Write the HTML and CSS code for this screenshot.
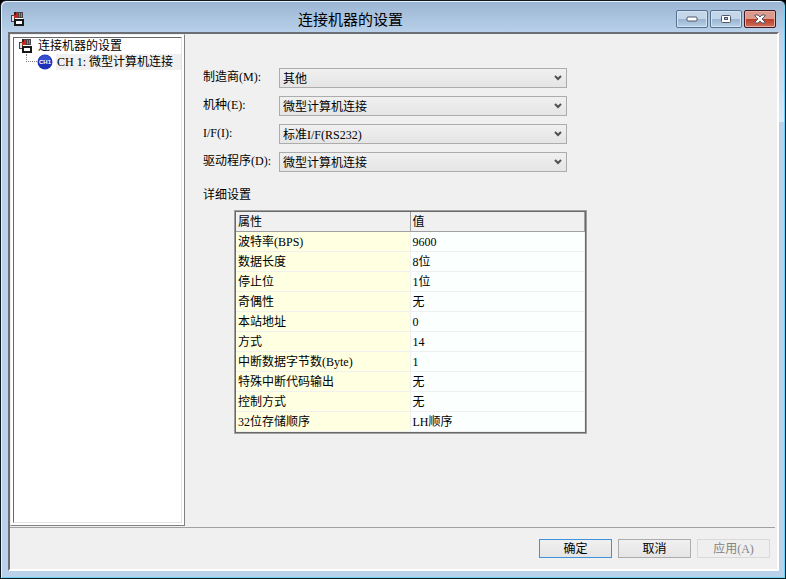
FILE: index.html
```html
<!doctype html>
<html lang="zh-CN">
  <head>
    <meta charset="UTF-8" />
    <meta name="viewport" content="width=device-width, initial-scale=1.0" />
    <title>连接机器的设置</title>
    <link rel="stylesheet" href="styles.css">
  </head>
  <body>
    <svg class="symbols" aria-hidden="true">
      <symbol id="machine" viewBox="0 0 14 14" shape-rendering="crispEdges">
        <path fill="#4a4448" d="M3 0h9v7H3zM0 3h3v7H0z" />
        <path fill="#e4e4e4" d="M1 4h2v5H1z" />
        <path fill="#c8281c" d="M3 1h4v5H3z" />
        <path fill="#3a2020" d="M3 0h2v3H3z" />
        <path fill="#8c8484" d="M8 1h1v4H8zM10 1h1v4h-1z" />
        <path fill="#181818" d="M3 7h10v7H3z" />
        <path fill="#fff" d="M5 9h6v3H5zM4 6h8v1H4z" />
      </symbol>
      <symbol id="chevron" viewBox="0 0 8 6">
        <path fill="none" stroke="#505050" stroke-width="2" d="M1 1l3 3 3-3" />
      </symbol>
    </svg>

    <div class="window">
      <header class="titlebar">
        <svg class="machine-icon"><use href="#machine" /></svg>
        <h1>连接机器的设置</h1>
        <div class="caption-buttons">
          <button type="button" class="caption" aria-label="最小化">
            <svg width="12" height="6" viewBox="0 0 12 6"><rect x="1" y="1" width="10" height="4" rx="1" fill="#fff" stroke="#535666" /></svg>
          </button>
          <button type="button" class="caption" aria-label="最大化">
            <svg width="12" height="10" viewBox="0 0 12 10"><rect x="1.5" y="1.5" width="9" height="7" rx="1" fill="#fff" stroke="#535666" /><rect x="4.5" y="3.5" width="3" height="2" fill="#9fb7d2" stroke="#535666" /></svg>
          </button>
          <button type="button" class="caption close" aria-label="关闭">
            <svg width="12" height="10" viewBox="0 0 12 10"><path fill="#fff" stroke="#535666" d="M1 1h3l2 2 2-2h3v1L8 5l3 3v1H8L6 7 4 9H1V8l3-3-3-3z" /></svg>
          </button>
        </div>
      </header>

      <form class="client">
        <div class="main">
          <nav class="sidebar" aria-label="连接机器">
            <ul class="tree">
              <li>
                <div class="node"><svg class="machine-icon"><use href="#machine" /></svg><span class="node-text">连接机器的设置</span></div>
                <ul>
                  <li class="node child">
                    <span class="branch"></span>
                    <svg class="channel-icon" viewBox="0 0 16 16">
                      <circle cx="8" cy="8" r="7.5" fill="#1c2fb8" />
                      <path d="M2 7a6 6 0 0 1 12 0z" fill="#3650d0" />
                      <text x="8" y="10" text-anchor="middle" fill="#fff">CH1</text>
                    </svg>
                    <span class="node-text selected">CH 1: 微型计算机连接</span>
                  </li>
                </ul>
              </li>
            </ul>
          </nav>

          <section class="settings">
            <div class="fields">
              <label for="maker">制造商(M):</label>
              <div class="combo">
                <select id="maker"><option>其他</option></select>
                <svg><use href="#chevron" /></svg>
              </div>
              <label for="model">机种(E):</label>
              <div class="combo">
                <select id="model"><option>微型计算机连接</option></select>
                <svg><use href="#chevron" /></svg>
              </div>
              <label for="interface">I/F(I):</label>
              <div class="combo">
                <select id="interface"><option>标准I/F(RS232)</option></select>
                <svg><use href="#chevron" /></svg>
              </div>
              <label for="driver">驱动程序(D):</label>
              <div class="combo">
                <select id="driver"><option>微型计算机连接</option></select>
                <svg><use href="#chevron" /></svg>
              </div>
            </div>

            <h2 id="detail-title">详细设置</h2>
            <div class="detail">
              <table aria-labelledby="detail-title">
                <thead>
                  <tr><th scope="col">属性</th><th scope="col">值</th></tr>
                </thead>
                <tbody>
                  <tr><th scope="row">波特率(BPS)</th><td>9600</td></tr>
                  <tr><th scope="row">数据长度</th><td>8位</td></tr>
                  <tr><th scope="row">停止位</th><td>1位</td></tr>
                  <tr><th scope="row">奇偶性</th><td>无</td></tr>
                  <tr><th scope="row">本站地址</th><td>0</td></tr>
                  <tr><th scope="row">方式</th><td>14</td></tr>
                  <tr><th scope="row">中断数据字节数(Byte)</th><td>1</td></tr>
                  <tr><th scope="row">特殊中断代码输出</th><td>无</td></tr>
                  <tr><th scope="row">控制方式</th><td>无</td></tr>
                  <tr><th scope="row">32位存储顺序</th><td>LH顺序</td></tr>
                </tbody>
              </table>
            </div>
          </section>
        </div>

        <footer class="actions">
          <button type="button" class="default">确定</button>
          <button type="button">取消</button>
          <button type="button" disabled>应用(A)</button>
        </footer>
      </form>
    </div>
  </body>
</html>
```

FILE: styles.css
```css
* {
  box-sizing: border-box;
}
body {
  margin: 0;
  background-color: #000;
  color: #000;
  font: 12px/16px "Liberation Serif", "Noto Sans CJK SC", serif;
}
ul {
  list-style: none;
  margin: 0;
  padding: 0;
}
button,
select {
  font: inherit;
  color: inherit;
  border-radius: 0;
}
.symbols {
  display: none;
}
.window {
  display: flex;
  flex-direction: column;
  min-height: 100vh;
  padding: 0 6px 7px 7px;
  border: 1px solid #101820;
  border-radius: 6px 6px 0 0;
  background:
    linear-gradient(#b9d1ea00 32px, #d8e8f8) right top / 7px 121px no-repeat,
    linear-gradient(#9ab5d3, #b9d1ea 32px);
  box-shadow: inset 1px 1px #e8f1fa, inset -1px -1px #6cd3f2;
}

/* title bar */
.titlebar {
  display: flex;
  align-items: center;
  height: 31px;
  padding: 5px 3px 0 3px;
}
.titlebar h1 {
  flex: 1;
  margin: 0;
  font: 15px/20px "Noto Sans CJK SC", sans-serif;
  text-align: center;
}
.machine-icon {
  flex: none;
  width: 14px;
  height: 14px;
}
.caption-buttons {
  display: flex;
  gap: 2px;
}
.caption {
  display: flex;
  align-items: center;
  justify-content: center;
  width: 32px;
  height: 18px;
  padding: 0;
  border: 1px solid #56708f;
  border-radius: 2px;
  background: linear-gradient(#c3d6ea 50%, #98b4d1 50%, #bad1e8);
  box-shadow: inset 0 0 0 1px #d5e4f3;
}
.caption.close {
  border-color: #431622;
  background: linear-gradient(#dc9a8c 50%, #b83c28 50%, #d0705a);
  box-shadow: inset 0 0 0 1px #e6b0a4;
}

/* client area */
.client {
  flex: 1;
  display: flex;
  flex-direction: column;
  border: 2px solid;
  border-color: #6c7076 #fff #fff #6c7076;
  background-color: #f0f0f0;
}
.main {
  flex: 1;
  display: flex;
  margin-right: 2px;
  border-bottom: 1px solid #a0a0a0;
}
.sidebar {
  display: flex;
  width: 175px;
  margin-bottom: 1px;
  padding: 2px;
  border: 1px solid;
  border-color: #f0f0f0 #808080 #808080 #f0f0f0;
  background-color: #fff;
}
.tree {
  flex: 1;
  padding: 0 0 0 5px;
  border: 1px solid;
  border-color: #696969 #e3e3e3 #e3e3e3 #696969;
  white-space: nowrap;
}
.node {
  display: flex;
  align-items: center;
  height: 16px;
}
.node-text {
  padding-left: 5px;
}
.node.child {
  padding-left: 7px;
}
.branch {
  align-self: flex-start;
  width: 11px;
  height: 8px;
  border: dotted #808080;
  border-width: 0 0 1px 1px;
}
.channel-icon {
  flex: none;
  width: 16px;
  height: 16px;
  font: bold 6px "Liberation Sans", sans-serif;
}
.node-text.selected {
  flex: 1;
  margin-left: 3px;
  padding-left: 1px;
  background-color: #f0f0f0;
}

.settings {
  padding: 34px 18px 20px;
}
.fields {
  display: grid;
  grid-template-columns: 76px 288px;
  gap: 8px 0;
}
.fields label {
  line-height: 18px;
}
.combo {
  display: grid;
  align-items: center;
}
.combo select,
.combo svg {
  grid-area: 1 / 1;
}
.combo select {
  appearance: none;
  width: 100%;
  height: 20px;
  padding: 1px 20px 0 3px;
  border: 1px solid #acacac;
  background: linear-gradient(#f0f0f0, #e5e5e5);
}
.combo svg {
  justify-self: end;
  width: 8px;
  height: 6px;
  margin-right: 5px;
  pointer-events: none;
}
.settings h2 {
  margin: 14px 0 6px;
  font: inherit;
  line-height: 18px;
}

/* property list */
.detail {
  width: 353px;
  margin-left: 31px;
  border: 1px solid #a0a0a0;
}
table {
  width: 100%;
  table-layout: fixed;
  border: 1px solid #696969;
  border-collapse: separate;
  border-spacing: 0;
}
th,
td {
  height: 20px;
  padding: 1px 2px 0;
  border: solid #f0f0f0;
  border-width: 0 1px 1px 0;
  font-weight: normal;
  line-height: 18px;
  text-align: left;
}
thead th {
  border-color: #a0a0a0;
  background-color: #f0f0f0;
}
tbody th {
  background-color: #ffffe1;
}
td {
  background-color: #fbfffe;
}

/* bottom buttons */
.actions {
  display: flex;
  justify-content: flex-end;
  gap: 6px;
  padding: 11px 7px 11px;
}
.actions button {
  width: 73px;
  height: 19px;
  padding: 0;
  border: 1px solid #acacac;
  background: linear-gradient(#f0f0f0, #e5e5e5);
}
.actions button.default {
  border-color: #3f93dc;
}
.actions button:disabled {
  border-color: #d9d9d9;
  background: #efefef;
  color: #838383;
}
```
